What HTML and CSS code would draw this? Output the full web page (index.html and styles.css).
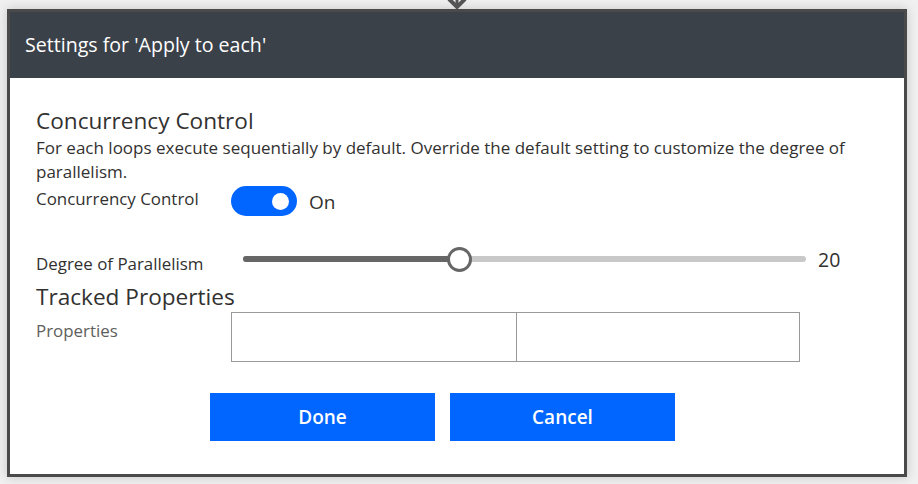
FILE: index.html
```html
<!DOCTYPE html>
<html lang="en">
<head>
<meta charset="utf-8">
<title>Settings for 'Apply to each'</title>
<link rel="stylesheet" href="styles.css">
</head>
<body>
<svg class="connector" width="20" height="12" viewBox="0 0 20 12" aria-hidden="true">
  <path d="M2 -1 L10 7 L18 -1" fill="none" stroke="#555" stroke-width="4"/>
  <path d="M10 -4 L10 6" fill="none" stroke="#555" stroke-width="3"/>
</svg>
<div class="dialog">
  <div class="dialog-header">Settings for 'Apply to each'</div>
  <div class="dialog-body">
    <h2 class="section-title">Concurrency Control</h2>
    <p class="description">For each loops execute sequentially by default. Override the default setting to customize the degree of parallelism.</p>
    <div class="row toggle-row">
      <span class="label label-toggle">Concurrency Control</span>
      <span class="toggle"><span class="knob"></span></span>
      <span class="toggle-text">On</span>
    </div>
    <div class="row slider-row">
      <span class="label label-slider">Degree of Parallelism</span>
      <div class="slider">
        <div class="track"><div class="fill" style="width:38.5%"></div></div>
        <div class="thumb" style="left:38.5%"></div>
      </div>
      <span class="slider-value">20</span>
    </div>
    <h2 class="section-title tracked">Tracked Properties</h2>
    <div class="row props-row">
      <span class="label label-props">Properties</span>
      <div class="inputs">
        <input class="prop-input first" type="text" aria-label="Property name">
        <input class="prop-input second" type="text" aria-label="Property value">
      </div>
    </div>
    <div class="actions">
      <button class="btn">Done</button>
      <button class="btn">Cancel</button>
    </div>
  </div>
</div>
</body>
</html>
```
FILE: styles.css
```css
* { box-sizing: border-box; }
html, body { margin: 0; }
body {
  background: #f0f0f0;
  padding: 9px 11px 7px 7px;
  font-family: "Open Sans", "Noto Sans", sans-serif;
  color: #323130;
  width: 918px;
  height: 484px;
  overflow: hidden;
}
.connector {
  position: absolute;
  left: 447px;
  top: 0;
}
.dialog {
  width: 900px;
  height: 468px;
  border: 3px solid #4a4a4a;
  background: #fff;
  box-shadow: 0 0 10px rgba(0,0,0,0.18);
  display: flex;
  flex-direction: column;
}
.dialog-header {
  height: 66px;
  background: #3b4149;
  color: #fff;
  font-size: 19.6px;
  line-height: 66px;
  padding-left: 15px;
  flex: none;
}
.dialog-body {
  padding: 29px 55px 0 26px;
  display: flex;
  flex-direction: column;
}
.section-title {
  margin: 0;
  font-weight: 400;
  font-size: 22.6px;
  line-height: 28px;
  color: #323130;
}
.description {
  margin: 1px 0 0;
  font-size: 17px;
  line-height: 24px;
}
.row { display: flex; }
.label { font-size: 16.9px; line-height: 24px; flex: none; }
.toggle-row { align-items: flex-start; height: 30px; margin-top: 2px; }
.label-toggle { width: 195px; margin-top: 1px; }
.toggle {
  width: 66px;
  height: 30px;
  border-radius: 15px;
  background: #0066ff;
  position: relative;
  flex: none;
}
.knob {
  position: absolute;
  width: 17px;
  height: 17px;
  border-radius: 50%;
  background: #fff;
  left: 41px;
  top: 7px;
}
.toggle-text {
  font-size: 19px;
  line-height: 30px;
  margin-left: 12px;
  margin-top: 1px;
}
.slider-row { margin-top: 31px; align-items: flex-start; height: 25px; }
.label-slider { width: 207px; margin-top: 5px; }
.slider {
  position: relative;
  width: 563px;
  height: 25px;
  flex: none;
}
.track {
  position: absolute;
  left: 0; right: 0;
  top: 9px;
  height: 6px;
  border-radius: 3px;
  background: #c8c8c8;
  overflow: hidden;
}
.fill { height: 100%; background: #666; }
.thumb {
  position: absolute;
  top: 0;
  width: 25px;
  height: 25px;
  margin-left: -12.5px;
  border-radius: 50%;
  background: #fff;
  border: 3px solid #666;
}
.slider-value {
  font-size: 19.5px;
  line-height: 24px;
  margin-left: 12px;
  margin-top: 1px;
}
.tracked { margin-top: 11px; }
.props-row { margin-top: 1px; align-items: flex-start; }
.label-props { width: 195px; margin-top: 7px; color: #605e5c; }
.inputs { display: flex; }
.prop-input {
  height: 50px;
  border: 1px solid #999;
  border-radius: 0;
  background: #fff;
  padding: 0 8px;
  font: inherit;
  outline: none;
  margin: 0;
}
.prop-input.first { width: 286px; }
.prop-input.second { width: 283px; border-left: none; }
.actions {
  display: flex;
  justify-content: center;
  gap: 15px;
  margin-top: 31px;
}
.btn {
  width: 225px;
  height: 48px;
  border: none;
  background: #0066ff;
  color: #fff;
  font-family: "Open Sans", "Noto Sans", sans-serif;
  font-weight: 600;
  font-size: 19px;
  padding: 0;
}
```
